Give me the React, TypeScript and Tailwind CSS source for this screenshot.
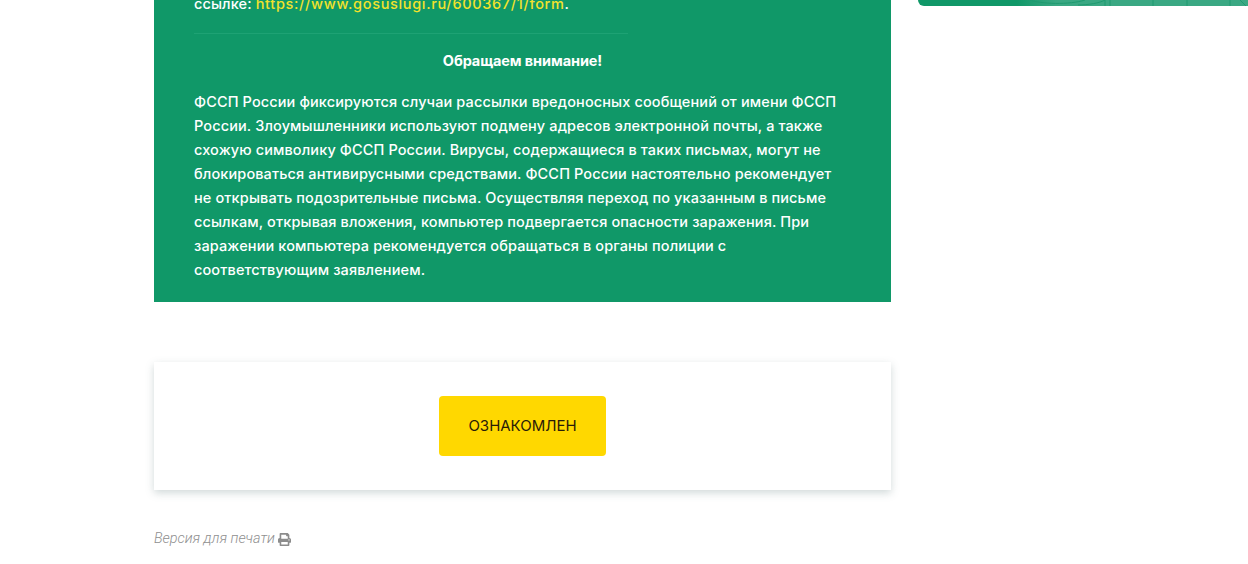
import { FaPrint } from 'react-icons/fa';

const LINES = [
  'ФССП России фиксируются случаи рассылки вредоносных сообщений от имени ФССП',
  'России. Злоумышленники используют подмену адресов электронной почты, а также',
  'схожую символику ФССП России. Вирусы, содержащиеся в таких письмах, могут не',
  'блокироваться антивирусными средствами. ФССП России настоятельно рекомендует',
  'не открывать подозрительные письма. Осуществляя переход по указанным в письме',
  'ссылкам, открывая вложения, компьютер подвергается опасности заражения. При',
  'заражении компьютера рекомендуется обращаться в органы полиции с',
  'соответствующим заявлением.',
];

export default function App() {
  return (
    <div className="flex h-[564px] w-full items-start overflow-hidden bg-white font-['Inter',sans-serif]">
      <main className="-mt-2 ml-[154px] w-[737px] shrink-0">
        {/* Notice */}
        <section className="h-[310px] bg-[#109868] px-10 text-[14.5px] font-medium leading-6 tracking-[0.12px] text-white">
          <p className="whitespace-nowrap">
            ссылке: <a className="tracking-[0.66px] text-[#f2e22c]">https://www.gosuslugi.ru/600367/1/form</a>.
          </p>
          <hr className="mt-[17px] w-[434px] border-t border-[#1ea274]" />
          <p className="mt-[15px] text-center font-bold tracking-[-0.1px]">Обращаем внимание!</p>
          <div className="mt-[17px]">
            {LINES.map((line) => (
              <p key={line} className="whitespace-nowrap">{line}</p>
            ))}
          </div>
        </section>

        {/* Confirm */}
        <section className="mt-[60px] flex h-[128px] items-center justify-center bg-white shadow-[0_3px_8px_rgba(90,120,120,0.28)]">
          <button className="h-[60px] w-[167px] rounded-[4px] bg-[#ffd800] text-[15px] text-[#2a1c08]">
            ОЗНАКОМЛЕН
          </button>
        </section>

        <p className="mt-10 flex items-center gap-[3px] font-['Roboto',sans-serif] text-[14.4px] font-light italic leading-[18px] text-[#8f8f8f]">
          Версия для печати <FaPrint className="h-[13px] w-[13px] text-[#8c8c8c]" />
        </p>
      </main>

      {/* Sidebar banner, mostly scrolled away */}
      <aside className="ml-[27px] h-[6px] flex-1 overflow-hidden rounded-bl-[6px] bg-[linear-gradient(90deg,#109868_30%,#3aa883_42%,#3aa883_100%)]">
        <svg width="330" height="6" viewBox="0 0 330 6" fill="none" stroke="#1f9a70" strokeWidth="1">
          <path d="M112 0c10 4 40 5 55 0M160 5c10 0 22-2 27-5M187 0v6M192 0v6M235 0v6M269 0v6M312 0v6M322 0l6 6" />
        </svg>
      </aside>
    </div>
  );
}
